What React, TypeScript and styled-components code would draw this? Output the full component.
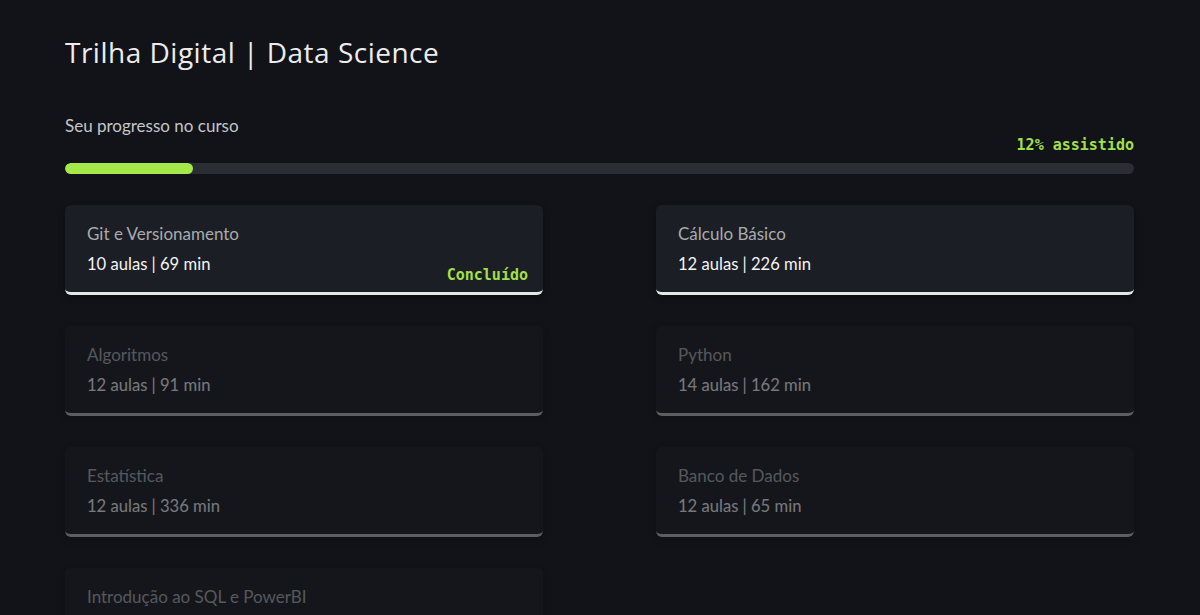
import React from 'react'
import styled, { createGlobalStyle } from 'styled-components'

type Module = {
  title: string
  lessons: number
  minutes: number
  locked?: boolean
  done?: boolean
}

const modules: Module[] = [
  { title: 'Git e Versionamento', lessons: 10, minutes: 69, done: true },
  { title: 'Cálculo Básico', lessons: 12, minutes: 226 },
  { title: 'Algoritmos', lessons: 12, minutes: 91, locked: true },
  { title: 'Python', lessons: 14, minutes: 162, locked: true },
  { title: 'Estatística', lessons: 12, minutes: 336, locked: true },
  { title: 'Banco de Dados', lessons: 12, minutes: 65, locked: true },
  { title: 'Introdução ao SQL e PowerBI', lessons: 8, minutes: 120, locked: true }
]

const progress = 12

const GlobalStyle = createGlobalStyle`
  html, body {
    margin: 0;
    background: #111318;
    overflow: hidden;
  }
  body {
    font-family: Lato, "Noto Sans", sans-serif;
    color: #e8e8e8;
  }
`

const Page = styled.div`
  width: 1069px;
  height: 580px;
  padding: 35px 66px 0 65px;
  overflow: hidden;
`

const Title = styled.h1`
  margin: 0;
  font-family: "Open Sans", "Noto Sans", sans-serif;
  font-weight: 400;
  font-size: 28px;
  line-height: 34px;
  color: #ececec;
  letter-spacing: 0.5px;
`

const ProgressSection = styled.section`
  margin-top: 47px;
  display: flex;
  flex-direction: column;
`

const ProgressLabel = styled.span`
  font-size: 17px;
  line-height: 20px;
  color: #c4c6c9;
`

const Percent = styled.span`
  align-self: flex-end;
  margin-top: 1px;
  font-family: "DejaVu Sans Mono", "Liberation Mono", monospace;
  font-weight: 700;
  font-size: 15px;
  line-height: 17px;
  color: #a3e048;
`

const Track = styled.div`
  margin-top: 9px;
  height: 11px;
  border-radius: 6px;
  background: #2a2d34;
  overflow: hidden;
`

const Fill = styled.div`
  height: 100%;
  border-radius: 6px;
  background: #a4e84a;
`

const Grid = styled.div`
  margin-top: 31px;
  display: grid;
  grid-template-columns: 478px 478px;
  column-gap: 113px;
  row-gap: 31px;
`

const Card = styled.div<{ $locked?: boolean }>`
  display: flex;
  align-items: flex-end;
  justify-content: space-between;
  height: 90px;
  box-sizing: border-box;
  padding: 19px 15px 18px 22px;
  border-radius: 6px;
  background: #1b1e24;
  border-bottom: 3px solid #e6e6e6;
  box-shadow: 0 2px 6px rgba(0, 0, 0, 0.35);
  opacity: ${p => (p.$locked ? 0.45 : 1)};
  ${p => p.$locked && 'background: #181b20; border-bottom-color: #b8b8b8;'}
`

const CardText = styled.div`
  display: flex;
  flex-direction: column;
  gap: 10px;
  align-self: flex-start;
`

const CardTitle = styled.span`
  font-size: 17px;
  line-height: 20px;
  color: #a9abae;
`

const CardMeta = styled.span`
  font-size: 16.6px;
  line-height: 20px;
  color: #f4f4f4;
`

const Status = styled.span`
  margin-bottom: -10px;
  font-family: "DejaVu Sans Mono", "Liberation Mono", monospace;
  font-weight: 700;
  font-size: 15px;
  line-height: 17px;
  color: #a3e048;
`

export default function App() {
  return (
    <>
      <GlobalStyle />
      <Page>
        <Title>Trilha Digital | Data Science</Title>
        <ProgressSection>
          <ProgressLabel>Seu progresso no curso</ProgressLabel>
          <Percent>{progress}% assistido</Percent>
          <Track>
            <Fill style={{ width: `${progress}%` }} />
          </Track>
        </ProgressSection>
        <Grid>
          {modules.map((m, i) => (
            <Card key={`mod-${i}`} $locked={m.locked}>
              <CardText>
                <CardTitle>{m.title}</CardTitle>
                <CardMeta>{m.lessons} aulas | {m.minutes} min</CardMeta>
              </CardText>
              {m.done && <Status>Concluído</Status>}
            </Card>
          ))}
        </Grid>
      </Page>
    </>
  )
}
